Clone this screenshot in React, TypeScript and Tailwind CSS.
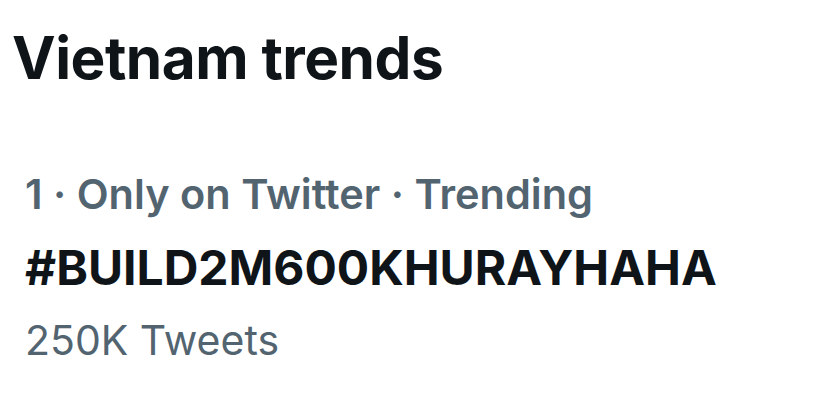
export default function App() {
  return (
    <div className="w-[814px] h-[407px] bg-white overflow-hidden font-['Inter',sans-serif]">
      <div className="pl-[12px] pt-[22px]">
        <h2 className="text-[58.5px] leading-[72px] font-bold tracking-[-0.5px] text-[#0f1419]">
          Vietnam trends
        </h2>
      </div>
      <div className="pl-[25px] pt-[64px] flex flex-col">
        <div className="text-[41.5px] leading-[72px] font-semibold text-[#536471]">
          1 · Only on Twitter · Trending
        </div>
        <div className="mt-[2px] text-[48px] leading-[72px] font-bold text-[#0f1419]">
          #BUILD2M600KHURAYHAHA
        </div>
        <div className="text-[41px] leading-[72px] font-normal text-[#536471]">
          250K Tweets
        </div>
      </div>
    </div>
  )
}
